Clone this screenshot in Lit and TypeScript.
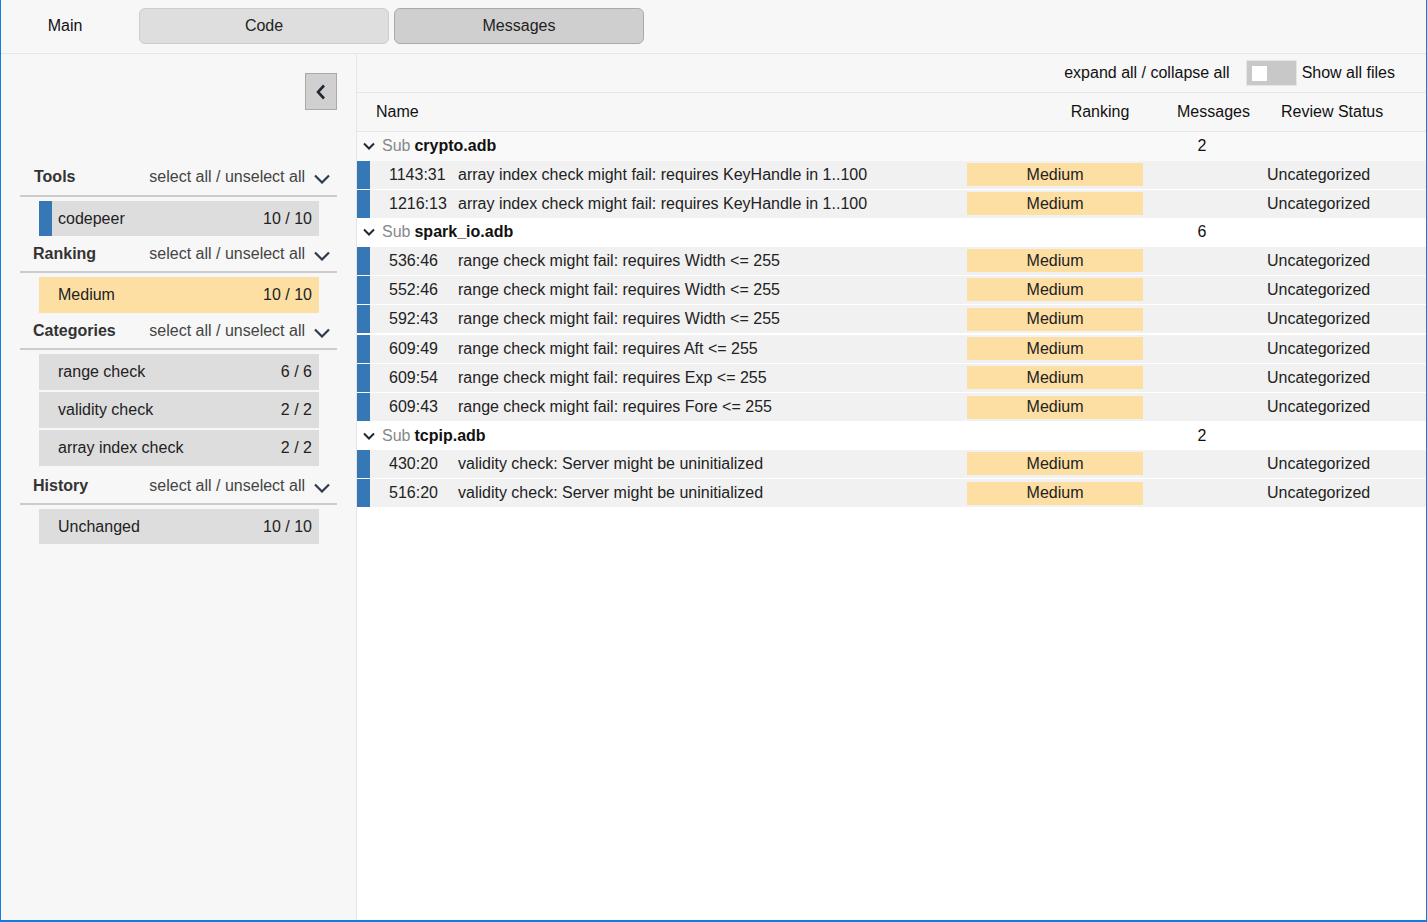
import { LitElement, html, css, svg } from "lit";
import { customElement } from "lit/decorators.js";

type Row = { loc: string; msg: string };
type Group = { name: string; count: number; rows: Row[]; tint?: boolean };
type FilterItem = { label: string; count: string; bar?: boolean; warm?: boolean };
type FilterSection = { title: string; items: FilterItem[]; cls: string };

const GROUPS: Group[] = [
  {
    name: "crypto.adb",
    count: 2,
    tint: true,
    rows: [
      { loc: "1143:31", msg: "array index check might fail: requires KeyHandle in 1..100" },
      { loc: "1216:13", msg: "array index check might fail: requires KeyHandle in 1..100" },
    ],
  },
  {
    name: "spark_io.adb",
    count: 6,
    rows: [
      { loc: "536:46", msg: "range check might fail: requires Width <= 255" },
      { loc: "552:46", msg: "range check might fail: requires Width <= 255" },
      { loc: "592:43", msg: "range check might fail: requires Width <= 255" },
      { loc: "609:49", msg: "range check might fail: requires Aft <= 255" },
      { loc: "609:54", msg: "range check might fail: requires Exp <= 255" },
      { loc: "609:43", msg: "range check might fail: requires Fore <= 255" },
    ],
  },
  {
    name: "tcpip.adb",
    count: 2,
    rows: [
      { loc: "430:20", msg: "validity check: Server might be uninitialized" },
      { loc: "516:20", msg: "validity check: Server might be uninitialized" },
    ],
  },
];

const SECTIONS: FilterSection[] = [
  { title: "Tools", cls: "s-tools", items: [{ label: "codepeer", count: "10 / 10", bar: true }] },
  { title: "Ranking", cls: "s-ranking", items: [{ label: "Medium", count: "10 / 10", warm: true }] },
  {
    title: "Categories",
    cls: "s-categories",
    items: [
      { label: "range check", count: "6 / 6" },
      { label: "validity check", count: "2 / 2" },
      { label: "array index check", count: "2 / 2" },
    ],
  },
  { title: "History", cls: "s-history", items: [{ label: "Unchanged", count: "10 / 10" }] },
];

const chevronDown = (w: number, h: number, sw: number, color: string) => html`<svg
  class="chev"
  width=${w}
  height=${h}
  viewBox="0 0 ${w} ${h}"
>
  ${svg`<path d="M1 1.5 L${w / 2} ${h - 1.5} L${w - 1} 1.5" fill="none" stroke=${color} stroke-width=${sw} />`}
</svg>`;

@customElement("app-root")
export class AppRoot extends LitElement {
  static styles = css`
    :host {
      display: block;
      box-sizing: border-box;
      width: 1427px;
      height: 922px;
      border: 1px solid #0f7ee0;
      border-top: none;
      border-width: 0 1px 2px 1px;
      background: #fff;
      font-family: "Liberation Sans", Arial, sans-serif;
      font-size: 16px;
      color: #111;
      overflow: hidden;
    }
    .frame {
      display: flex;
      flex-direction: column;
      height: 100%;
    }
    .topbar {
      flex: none;
      height: 53px;
      box-sizing: content-box;
      border-bottom: 1px solid #e6e6e6;
      background: #f7f7f7;
      display: flex;
      align-items: flex-start;
      padding-top: 8px;
      height: 45px;
    }
    .tab-main {
      width: 138px;
      height: 36px;
      display: flex;
      align-items: center;
      justify-content: center;
      padding-right: 10px;
      box-sizing: border-box;
    }
    .tab {
      box-sizing: border-box;
      width: 250px;
      height: 36px;
      margin-right: 5px;
      display: flex;
      align-items: center;
      justify-content: center;
      background: #dedede;
      border: 1px solid #cccccc;
      border-radius: 6px;
      color: #222;
    }
    .tab.active {
      background: #cfcfcf;
      border-color: #aaaaaa;
    }
    .body {
      flex: 1;
      display: flex;
      min-height: 0;
    }
    .side {
      flex: none;
      width: 356px;
      box-sizing: border-box;
      background: #f7f7f7;
      border-right: 1px solid #e6e6e6;
      padding: 19px 19px 0 19px;
      color: #333;
    }
    .collapse-row {
      display: flex;
      justify-content: flex-end;
      height: 37px;
    }
    .collapse {
      box-sizing: border-box;
      width: 32px;
      height: 37px;
      background: #d0d0d0;
      border: 1px solid #aaa;
      display: flex;
      align-items: center;
      justify-content: center;
    }
    .section-head {
      display: flex;
      align-items: center;
      height: 36px;
      border-bottom: 2px solid #cccccc;
      box-sizing: content-box;
    }
    .section-title {
      font-weight: 700;
      padding-left: 13px;
      flex: 1;
      color: #333;
    }
    .links {
      color: #444;
      margin-right: 9px;
    }
    .section-head .chev {
      margin-right: 7px;
      margin-top: 4px;
    }
    .s-tools {
      margin-top: 49px;
    }
    .s-tools .section-title {
      padding-left: 14px;
    }
    .items {
      display: flex;
      flex-direction: column;
      gap: 3px;
      margin: 4px 18px 0 19px;
    }
    .item {
      height: 35px;
      display: flex;
      align-items: center;
      justify-content: space-between;
      background: #dddddd;
      padding: 0 7px 0 19px;
      color: #222;
    }
    .item.warm {
      background: #fedfa3;
      height: 36px;
    }
    .item.bar {
      padding-left: 6px;
      border-left: 13px solid #3678b5;
    }
    .s-ranking .section-head,
    .s-categories .section-head,
    .s-history .section-head {
      height: 35px;
    }
    .s-categories .items {
      gap: 2px;
    }
    .s-categories .item {
      height: 36px;
    }
    .s-history {
      margin-top: 2px;
    }
    .main {
      flex: 1;
      min-width: 0;
      display: flex;
      flex-direction: column;
      background: #fff;
    }
    .toolbar {
      flex: none;
      height: 38px;
      background: #f7f7f7;
      border-bottom: 1px solid #e6e6e6;
      display: flex;
      align-items: center;
      justify-content: flex-end;
      padding-right: 31px;
      color: #111;
    }
    .toggle {
      box-sizing: border-box;
      width: 51px;
      height: 26px;
      margin: 0 5px 0 16px;
      background: #c8c8c8;
      border: 1px solid #dfeadf;
      display: flex;
      align-items: center;
      padding-left: 5px;
    }
    .knob {
      width: 15px;
      height: 15px;
      background: #fff;
    }
    .thead {
      flex: none;
      height: 38px;
      background: #f7f7f7;
      border-bottom: 1px solid #e6e6e6;
      display: grid;
      grid-template-columns: 628px 178px 1fr 145px;
      align-items: center;
    }
    .thead .n {
      padding-left: 19px;
    }
    .thead .r {
      text-align: center;
      padding-left: 0;
      margin-left: 52px;
      white-space: nowrap;
    }
    .thead .m {
      justify-content: center;
      padding-left: 14px;
    }
    .group {
      display: flex;
      align-items: center;
      height: 28.67px;
      color: #111;
    }
    .group.tint {
      background: #f9f9f9;
    }
    .group .chev {
      margin: 0 7px 0 6px;
    }
    .sub {
      color: #888;
      margin-right: 4px;
    }
    .fname {
      font-weight: 700;
      width: 783px;
      flex: none;
      white-space: nowrap;
    }
    .rows {
      display: flex;
      flex-direction: column;
      gap: 1.33px;
    }
    .row {
      height: 28px;
      display: flex;
      align-items: center;
      background: #f1f1f1;
      color: #222;
    }
    .row .mark {
      flex: none;
      width: 13px;
      height: 100%;
      background: #3678b5;
    }
    .row .loc {
      flex: none;
      width: 88px;
      padding-left: 19px;
      box-sizing: content-box;
      width: 69px;
      padding-left: 19px;
    }
    .row .msg {
      flex: none;
      width: 509px;
      white-space: nowrap;
    }
    .row .rank {
      flex: none;
      width: 176px;
      height: 23px;
      background: #fedfa3;
      display: flex;
      align-items: center;
      justify-content: center;
    }
    .row .status {
      margin-left: 124px;
      white-space: nowrap;
    }
  `;

  private renderSection(s: FilterSection) {
    return html`<div class=${s.cls}>
      <div class="section-head">
        <span class="section-title">${s.title}</span>
        <span class="links">select all / unselect all</span>
        ${chevronDown(16, 10, 2.2, "#2f3b4c")}
      </div>
      <div class="items">
        ${s.items.map(
          (i) => html`<div class="item ${i.bar ? "bar" : ""} ${i.warm ? "warm" : ""}">
            <span>${i.label}</span><span>${i.count}</span>
          </div>`
        )}
      </div>
    </div>`;
  }

  private renderGroup(g: Group) {
    return html`<div class="group ${g.tint ? "tint" : ""}">
        ${chevronDown(12, 8, 2, "#1f2733")}
        <span class="sub">Sub</span>
        <span class="fname">${g.name}</span>
        <span>${g.count}</span>
      </div>
      <div class="rows">
        ${g.rows.map(
          (r) => html`<div class="row">
            <span class="mark"></span>
            <span class="loc">${r.loc}</span>
            <span class="msg">${r.msg}</span>
            <span class="rank">Medium</span>
            <span class="status">Uncategorized</span>
          </div>`
        )}
      </div>`;
  }

  render() {
    return html`<div class="frame">
      <div class="topbar">
        <div class="tab-main">Main</div>
        <div class="tab">Code</div>
        <div class="tab active">Messages</div>
      </div>
      <div class="body">
        <aside class="side">
          <div class="collapse-row">
            <div class="collapse">
              <svg width="10" height="16" viewBox="0 0 10 16">
                <path d="M8 1.5 L2 8 L8 14.5" fill="none" stroke="#1f2733" stroke-width="2.6" />
              </svg>
            </div>
          </div>
          ${SECTIONS.map((s) => this.renderSection(s))}
        </aside>
        <main class="main">
          <div class="toolbar">
            <span>expand all / collapse all</span>
            <span class="toggle"><span class="knob"></span></span>
            <span>Show all files</span>
          </div>
          <div class="thead">
            <span class="n">Name</span>
            <span class="r">Ranking</span>
            <span class="m">Messages</span>
            <span class="s">Review Status</span>
          </div>
          ${GROUPS.map((g) => this.renderGroup(g))}
        </main>
      </div>
    </div>`;
  }
}
